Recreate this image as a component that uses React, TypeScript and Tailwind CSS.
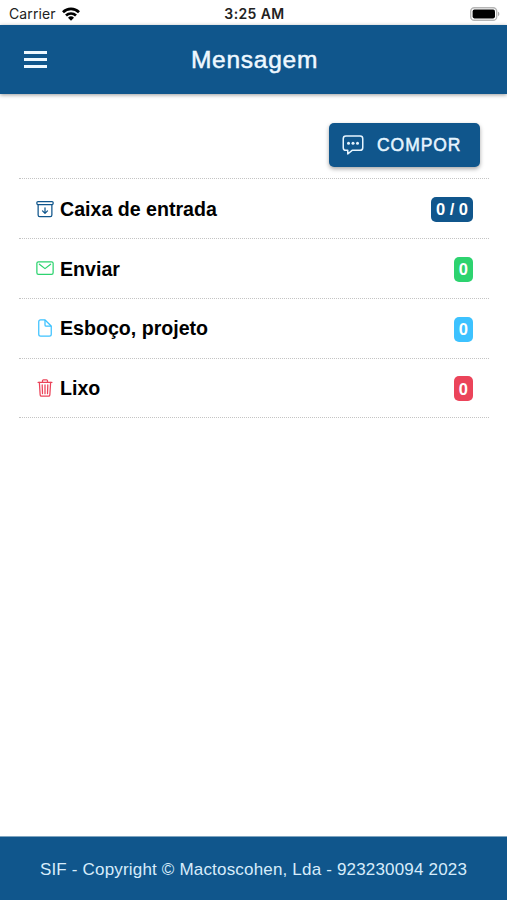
import type { ReactNode } from "react";
import {
  IoArchiveOutline,
  IoChatboxEllipsesOutline,
  IoDocumentOutline,
  IoMailOutline,
  IoTrashOutline,
} from "react-icons/io5";

function StatusBar() {
  return (
    <div className="grid h-[25px] shrink-0 grid-cols-3 items-center bg-white pt-[2px] pl-[9px] pr-[7px] font-['Inter',sans-serif] text-[14px] leading-none text-[#222]">
      <div className="flex items-center gap-[6px]">
        <span className="tracking-[0.1px]">Carrier</span>
        <svg width="18" height="14" viewBox="0 0 18 14" fill="none" stroke="#000" strokeWidth="2.7">
          <path d="M1 5.2a11.4 11.4 0 0 1 16 0" />
          <path d="M4 8.5a7.2 7.2 0 0 1 10 0" />
          <path d="M9 13.8 6 10.8a4.3 4.3 0 0 1 6 0z" fill="#000" stroke="none" />
        </svg>
      </div>
      <span className="text-center font-semibold tracking-[0.4px] whitespace-nowrap">3:25 AM</span>
      <svg className="justify-self-end" width="30" height="14" viewBox="0 0 30 14">
        <rect x="0.7" y="0.7" width="26" height="12.6" rx="3.6" fill="#fff" stroke="#b5b5b5" strokeWidth="1.4" />
        <rect x="2.6" y="2.6" width="22.4" height="8.8" rx="1.8" fill="#000" />
        <path d="M28 4.8c1.8.6 1.8 3.8 0 4.4z" fill="#aaa" />
      </svg>
    </div>
  );
}

function Row({ icon, label, count, badge }: { icon: ReactNode; label: string; count: string; badge: string }) {
  return (
    <div className="flex h-[59.8px] items-center border-b border-dotted border-[#c4c4c4] pl-[16px] pr-[16px]">
      <span className="mr-[5px] text-[20px]">{icon}</span>
      <span className="flex-1 pt-[2px] text-[19.6px] font-bold text-black">{label}</span>
      <span className={`mt-[2px] flex h-[25px] items-center justify-center rounded-[5px] px-[5px] text-[16.5px] font-bold text-white ${badge}`}>
        {count}
      </span>
    </div>
  );
}

export default function App() {
  return (
    <div className="flex h-[900px] w-[507px] flex-col bg-white font-['Liberation_Sans',sans-serif]">
      <StatusBar />
      <header className="grid h-[69px] shrink-0 grid-cols-[1fr_auto_1fr] items-center bg-[#10568c] pl-[24px] pr-[24px] shadow-[0_1px_4px_rgba(0,0,0,0.4)]">
        <button className="flex w-[23px] flex-col gap-[4px]" aria-label="Menu">
          <span className="h-[3px] bg-[#eef8ff]" />
          <span className="h-[3px] bg-[#eef8ff]" />
          <span className="h-[3px] bg-[#eef8ff]" />
        </button>
        <h1 className="pt-[2px] pl-[2px] text-[24.5px] tracking-[0.75px] text-[#eef8ff] [-webkit-text-stroke:0.5px_#eef8ff]">Mensagem</h1>
      </header>
      <main className="flex-1 pt-[29px] pl-[19px] pr-[18px]">
        <div className="flex h-[56.2px] justify-end border-b border-dotted border-[#c4c4c4] pr-[9px]">
          <button className="flex h-[44px] w-[151px] items-center rounded-[5px] bg-[#10568c] pl-[12px] text-[#e6f5ff] shadow-[0_2px_4px_rgba(0,0,0,0.35)]">
            <IoChatboxEllipsesOutline className="mr-[12px] text-[24px]" />
            <span className="pt-[1px] text-[17.5px] tracking-[0.95px] [-webkit-text-stroke:0.5px_#e6f5ff]">COMPOR</span>
          </button>
        </div>
        <Row icon={<IoArchiveOutline className="text-[#10568c]" />} label="Caixa de entrada" count="0 / 0" badge="bg-[#10568c]" />
        <Row icon={<IoMailOutline className="text-[#2dd36f]" />} label="Enviar" count="0" badge="bg-[#2dd36f]" />
        <Row icon={<IoDocumentOutline className="text-[#3dc2ff]" />} label="Esboço, projeto" count="0" badge="bg-[#3dc2ff]" />
        <Row icon={<IoTrashOutline className="text-[#eb445a]" />} label="Lixo" count="0" badge="bg-[#eb445a]" />
      </main>
      <footer className="flex h-[64px] shrink-0 items-center justify-center border-t border-[#7fa5c0] bg-[#10568c] pt-[3px] text-[17px] tracking-[0.18px] whitespace-nowrap text-[#d7ecfb]">
        SIF - Copyright © Mactoscohen, Lda - 923230094 2023
      </footer>
    </div>
  );
}
